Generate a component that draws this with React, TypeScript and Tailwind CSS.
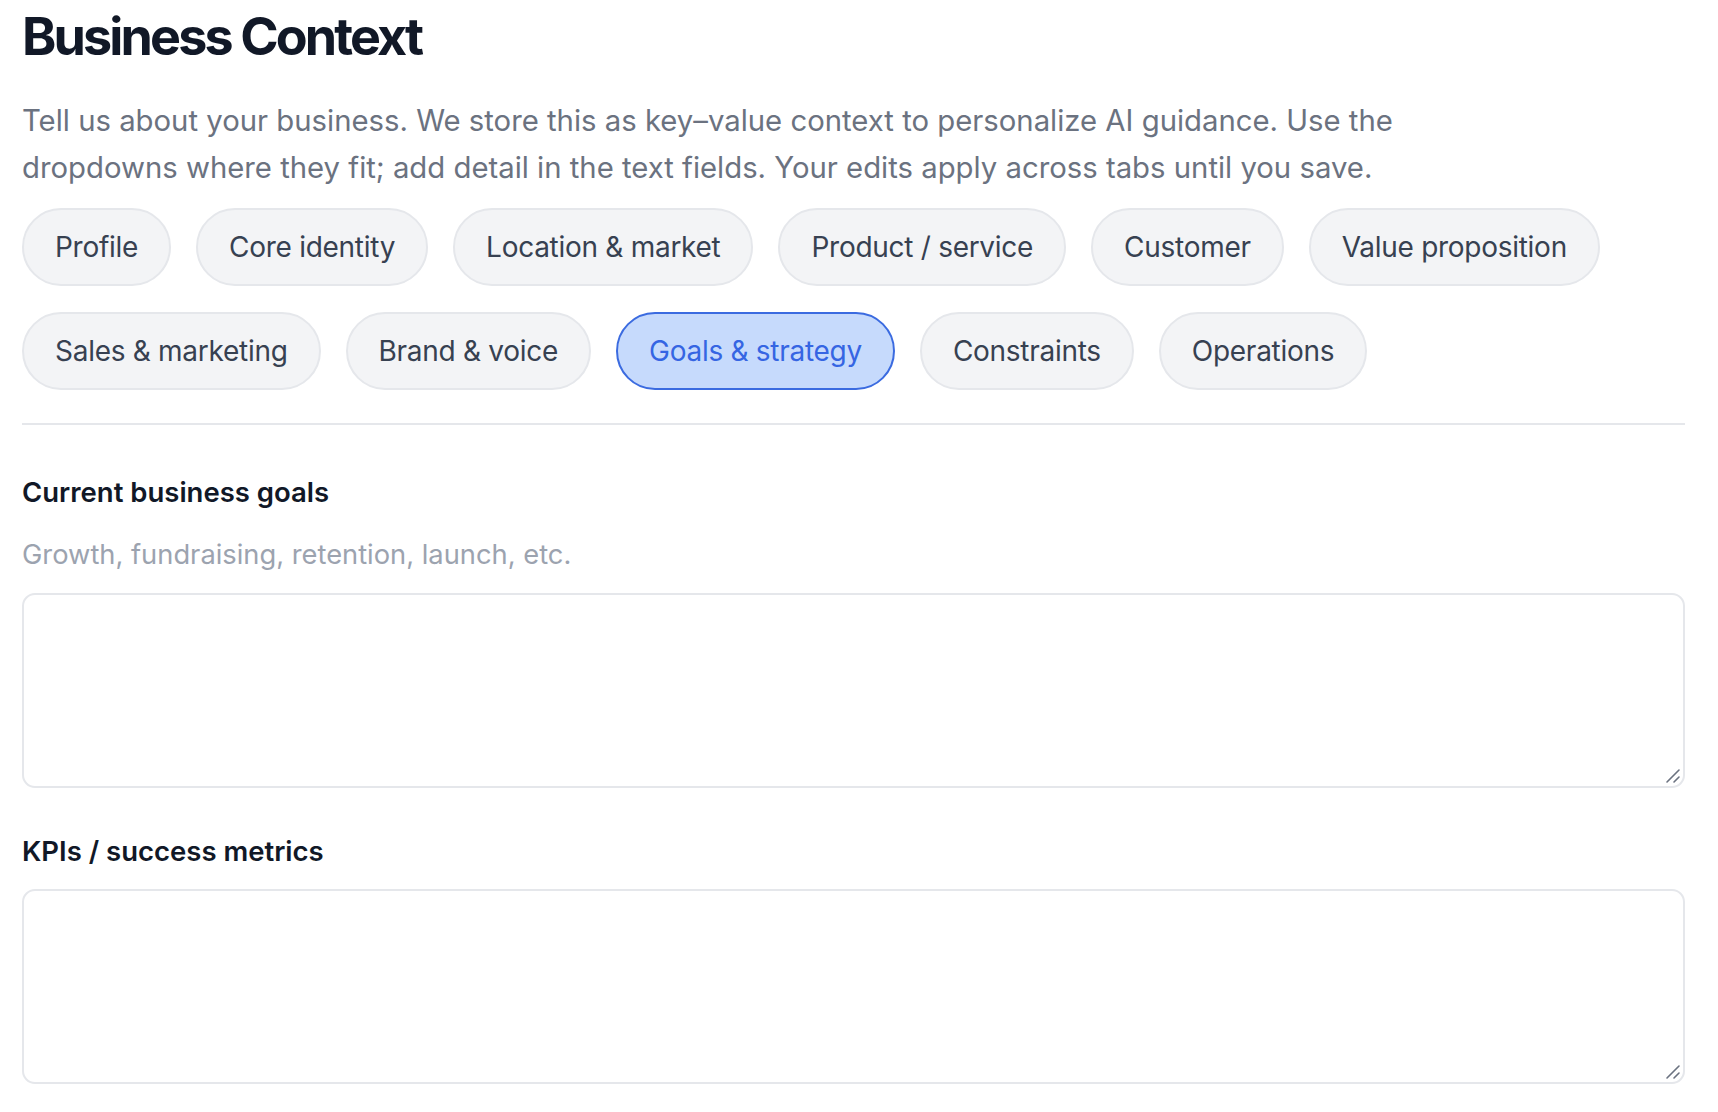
import { useState } from "react";

const TABS = [
  "Profile",
  "Core identity",
  "Location & market",
  "Product / service",
  "Customer",
  "Value proposition",
  "Sales & marketing",
  "Brand & voice",
  "Goals & strategy",
  "Constraints",
  "Operations",
];

function ResizeGrip() {
  return (
    <svg
      className="pointer-events-none absolute bottom-[4px] right-[4px]"
      width="16"
      height="16"
      viewBox="0 0 16 16"
      fill="none"
      stroke="#6b7280"
      strokeWidth="1.6"
      strokeLinecap="round"
    >
      <path d="M2 14 L14 2" />
      <path d="M9 14 L14 9" />
    </svg>
  );
}

function Field({ label, hint }: { label: string; hint?: string }) {
  return (
    <div className="flex flex-col">
      <label className="text-[27.5px] leading-[36px] font-semibold text-[#111827]">{label}</label>
      {hint && (
        <p className="mt-[27px] text-[27.3px] leading-[36px] text-[#9ca3af]">{hint}</p>
      )}
      <div className="relative mt-[20px]">
        <textarea className="block h-[195px] w-full resize-none rounded-[13px] border-2 border-[#e5e7eb] bg-white px-4 py-3 text-[24px] text-[#111827] outline-none" />
        <ResizeGrip />
      </div>
    </div>
  );
}

export default function App() {
  const [active, setActive] = useState("Goals & strategy");

  return (
    <div
      className="min-h-screen bg-white pl-[22px] pr-[33px] pt-[7px]"
      style={{ fontFamily: "Inter, 'Noto Sans', sans-serif" }}
    >
      <h1 className="text-[52px] leading-[60px] font-bold tracking-[-0.055em] text-[#111827]">
        Business Context
      </h1>
      <p className="mt-[30px] max-w-[1440px] text-[29.3px] leading-[47px] text-[#6b7280]">
        Tell us about your business. We store this as key–value context to personalize AI guidance. Use the
        dropdowns where they fit; add detail in the text fields. Your edits apply across tabs until you save.
      </p>

      <div className="mt-[17px] flex flex-wrap gap-x-[25px] gap-y-[26px] border-b-2 border-[#e5e7eb] pb-[33px]">
        {TABS.map((t) => {
          const on = t === active;
          return (
            <button
              key={t}
              onClick={() => setActive(t)}
              className={
                on
                  ? "h-[78px] rounded-full border-2 border-[#3b6be0] bg-[#c6dafc] px-[31px] text-[28px] tracking-[-0.01em] text-[#3565e3]"
                  : "h-[78px] rounded-full border-2 border-[#e5e7eb] bg-[#f3f4f6] px-[31px] text-[28px] tracking-[-0.01em] text-[#374151]"
              }
            >
              {t}
            </button>
          );
        })}
      </div>

      <div className="mt-[49px] flex flex-col gap-[45px]">
        <Field label="Current business goals" hint="Growth, fundraising, retention, launch, etc." />
        <Field label="KPIs / success metrics" />
      </div>
    </div>
  );
}
